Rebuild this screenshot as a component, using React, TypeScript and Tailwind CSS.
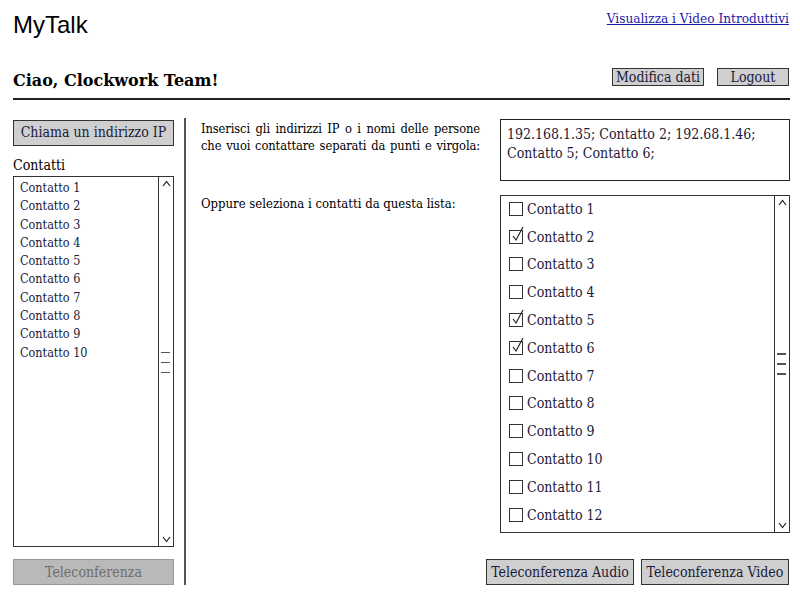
import React from 'react';

const serif = "font-['DejaVu_Serif_Condensed','DejaVu_Serif',serif]";

const leftContacts = Array.from({ length: 10 }, (_, i) => `Contatto ${i + 1}`);
const checked = [2, 5, 6];
const rightContacts = Array.from({ length: 12 }, (_, i) => i + 1);

const Scrollbar: React.FC<{ thumbTop: string }> = ({ thumbTop }) => (
  <div className="relative w-[15px] h-full border-l border-[#333] shrink-0">
    <svg className="absolute left-[3px] top-[3px]" width="9" height="7" viewBox="0 0 9 7">
      <path d="M1 6 L4.5 1.5 L8 6" fill="none" stroke="#222" strokeWidth="1.2" />
    </svg>
    <div className={`absolute left-[2px] flex flex-col gap-[8.5px] ${thumbTop}`}>
      <div className="w-[9px] h-[1.5px] bg-[#555]" />
      <div className="w-[9px] h-[1.5px] bg-[#555]" />
      <div className="w-[9px] h-[1.5px] bg-[#555]" />
    </div>
    <svg className="absolute left-[3px] bottom-[3px]" width="9" height="7" viewBox="0 0 9 7">
      <path d="M1 1 L4.5 5.5 L8 1" fill="none" stroke="#222" strokeWidth="1.2" />
    </svg>
  </div>
);

const Checkbox: React.FC<{ on: boolean }> = ({ on }) => (
  <div className="relative w-[14px] h-[14px] border border-[#333] shrink-0">
    {on && (
      <svg className="absolute left-[1px] -top-[5px]" width="14" height="18" viewBox="0 0 14 18">
        <path d="M2 10 L5 14 L12 1" fill="none" stroke="#222" strokeWidth="1.2" />
      </svg>
    )}
  </div>
);

export default function App() {
  return (
    <div className={`w-[800px] h-[600px] bg-white relative overflow-hidden pl-[13px] pr-[10px] text-black ${serif}`}>
      {/* top bar */}
      <div className="flex justify-between items-start h-[66px]">
        <div className="font-['Liberation_Sans',sans-serif] text-[24px] leading-[28px] mt-[11px]">MyTalk</div>
        <a href="#" className="text-[13.5px] leading-[18px] mt-[9px] mr-[1px] text-[#1a1aa6] underline">
          Visualizza i Video Introduttivi
        </a>
      </div>

      {/* greeting row */}
      <div className="flex justify-between items-start h-[32px]">
        <div className="font-['DejaVu_Serif',serif] font-bold text-[16px] leading-[24px] mt-[3px]">Ciao, Clockwork Team!</div>
        <div className="flex gap-[13px] mt-[2px] mr-[1px]">
          <button className="w-[92px] h-[18px] bg-[#cfcfcf] border border-[#333] text-[14px] leading-[14px] text-[#1a1a3a]">
            Modifica dati
          </button>
          <button className="w-[72px] h-[18px] bg-[#cfcfcf] border border-[#333] text-[14px] leading-[14px] text-[#1a1a3a]">
            Logout
          </button>
        </div>
      </div>

      <div className="h-[2px] bg-[#222]" />

      {/* body */}
      <div className="flex mt-[18px] h-[467px]">
        {/* left column */}
        <div className="w-[161px] flex flex-col shrink-0 pt-[2px]">
          <button className="h-[26px] bg-[#cfcfcf] border border-[#333] text-[14px] text-[#1a1a3a]">
            Chiama un indirizzo IP
          </button>
          <div className="mt-[10px] text-[14px] leading-[18px]">Contatti</div>
          <div className="mt-[2px] h-[372px] border border-[#333] flex">
            <div className="flex-1 pt-[2px] pl-[6px]">
              {leftContacts.map(c => (
                <div key={c} className="text-[12.5px] leading-[18.3px] text-[#1a1a3a]">
                  {c}
                </div>
              ))}
            </div>
            <Scrollbar thumbTop="top-[175px]" />
          </div>
          <button className="mt-[12px] h-[26px] bg-[#b9b9b9] border border-[#999] text-[14px] text-[#6e6e6e]">
            Teleconferenza
          </button>
        </div>

        {/* divider */}
        <div className="w-[2px] bg-[#555] ml-[10px] mr-[15px] shrink-0" />

        {/* right area */}
        <div className="flex-1 flex flex-col pt-[1px]">
          <div className="flex justify-between">
            <p className="w-[279px] text-[12.8px] tracking-[-0.1px] leading-[17px] text-justify [text-align-last:justify] mt-[1px]">
              Inserisci gli indirizzi IP o i nomi delle persone
              <br />
              che vuoi contattare separati da punti e virgola:
            </p>
            <div className="w-[290px] h-[62px] border border-[#222] px-[6px] pt-[5px] text-[14px] leading-[19px] text-[#1a1a3a]">
              192.168.1.35; Contatto 2; 192.68.1.46; Contatto 5; Contatto 6;
            </div>
          </div>

          <div className="flex justify-between mt-[14px]">
            <p className="text-[13px] leading-[17px] mt-[0px]">Oppure seleziona i contatti da questa lista:</p>
            <div className="w-[290px] h-[338px] border border-[#333] flex">
              <div className="flex-1 pl-[8px] -mt-[1px]">
                {rightContacts.map(n => (
                  <div key={n} className="h-[27.8px] flex items-center gap-[4px]">
                    <Checkbox on={checked.includes(n)} />
                    <span className="text-[14px] leading-[18px] text-[#1a1a3a]">Contatto {n}</span>
                  </div>
                ))}
              </div>
              <Scrollbar thumbTop="top-[157px]" />
            </div>
          </div>

          <div className="flex justify-end gap-[7px] mt-[26px] mr-[1px]">
            <button className="w-[148px] h-[26px] bg-[#cfcfcf] border border-[#333] text-[14px] text-[#1a1a3a]">
              Teleconferenza Audio
            </button>
            <button className="w-[148px] h-[26px] bg-[#cfcfcf] border border-[#333] text-[14px] text-[#1a1a3a]">
              Teleconferenza Video
            </button>
          </div>
        </div>
      </div>
    </div>
  );
}
